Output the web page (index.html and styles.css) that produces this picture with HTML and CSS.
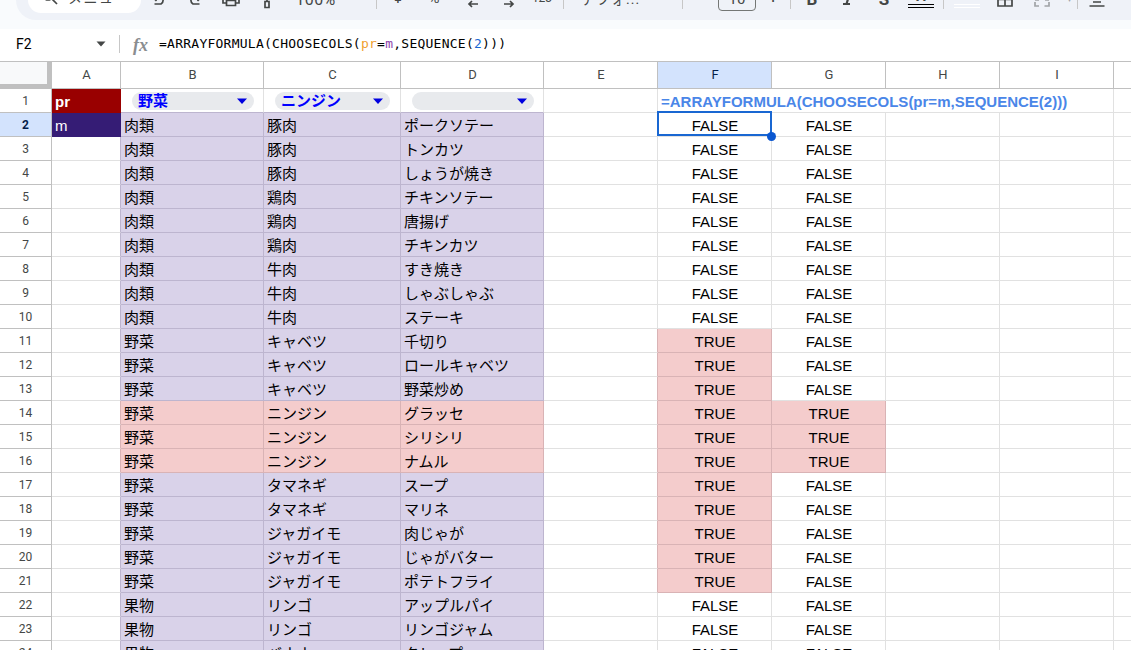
FILE: index.html
```
<!DOCTYPE html>
<html lang="ja">
<head>
    <meta charset="UTF-8">
    <meta name="viewport" content="width=device-width, initial-scale=1.0">
    <title>スプレッドシート</title>
    <link rel="stylesheet" href="styles.css">
</head>
<body>
    <div class="app">
        <!-- ツールバー -->
        <div class="toolbar">
            <div class="menu-search">
                <svg width="20" height="20" viewBox="0 0 20 20"><circle cx="8" cy="8" r="5"/><path d="M11.8 11.8L17 17"/></svg>
                <span>メニュー</span>
            </div>
            <div class="tool w36"><svg width="20" height="20" viewBox="0 0 20 20"><path d="M4 7h8a4 4 0 0 1 0 7H5.500M7.500 3L3.800 7l3.700 4"/></svg></div>
            <div class="tool w36"><svg width="20" height="20" viewBox="0 0 20 20"><path d="M16 7H8a4 4 0 0 0 0 7h6.500M12.500 3l3.700 4l-3.700 4"/></svg></div>
            <div class="tool w36"><svg width="20" height="20" viewBox="0 0 20 20"><path d="M5.500 6V2h9v4M5.500 13H2V7h16v6h-3.500M5.500 10.500h9v5h-9z"/></svg></div>
            <div class="tool w36"><svg width="20" height="20" viewBox="0 0 20 20"><path d="M4 2h12v4H4zM10 6v5M8 11.500h4v6H8z"/></svg></div>
            <div class="tool zoom">100%</div>
            <div class="divider"></div>
            <div class="tool raised w42">¥</div>
            <div class="tool raised w30">%</div>
            <div class="tool w48"><svg width="20" height="20" viewBox="0 0 20 20"><path d="M15 14H6M9 11l-3 3 3 3M5 5h1M9 3h4v4H9z"/></svg></div>
            <div class="tool w24"><svg width="20" height="20" viewBox="0 0 20 20"><path d="M5 14h9M11 11l3 3-3 3M3 5h1M7 3h3v4H7zM13 3h3v4h-3z"/></svg></div>
            <div class="tool raised num">123</div>
            <div class="divider"></div>
            <div class="tool raised font-name">デフォ...</div>
            <div class="divider"></div>
            <div class="font-size">10</div>
            <div class="tool plus">+</div>
            <div class="divider"></div>
            <div class="tool raised bold w42">B</div>
            <div class="tool w30"><svg width="20" height="20" viewBox="0 0 20 20"><path class="thick" d="M8 4h7M5 14h7M11.500 4L8.500 14"/></svg></div>
            <div class="tool raised bold w42">S</div>
            <div class="tool text-color">A</div>
            <div class="divider"></div>
            <div class="tool fill-color"><svg width="20" height="20" viewBox="0 0 20 20"><path d="M4 4l5-3 6 3-6 5zM16 9v2"/></svg></div>
            <div class="tool w36"><svg width="20" height="20" viewBox="0 0 20 20"><path d="M3 3h14v13H3zM10 3v13M3 9.500h14"/></svg></div>
            <div class="tool w38 off"><svg width="20" height="20" viewBox="0 0 20 20"><path d="M3 8V3h5M12 3h5v5M3 12v4h4M12.500 16H17v-4M3 10h4M13 10h4"/></svg></div>
            <div class="tool raised caret off">▾</div>
            <div class="divider"></div>
            <div class="tool w38"><svg width="20" height="20" viewBox="0 0 20 20"><path d="M3 4h14M6 8h8M6 12h8M2.500 16h15"/></svg></div>
        </div>

        <!-- 数式バー -->
        <div class="formula-bar">
            <div class="name-box">F2</div>
            <svg class="name-caret" width="10" height="6" viewBox="0 0 10 6"><path d="M0.500 0.500h9L5 5.500z"/></svg>
            <div class="fx"><i>fx</i></div>
            <div class="formula">=ARRAYFORMULA(CHOOSECOLS(<span class="c-orange">pr</span>=<span class="c-purple">m</span>,SEQUENCE(<span class="c-blue">2</span>)))</div>
        </div>

        <!-- シート -->
        <table class="sheet">
            <colgroup>
                <col class="col-no"><col class="col-a"><col class="col-b"><col class="col-c"><col class="col-b">
                <col class="col-e"><col class="col-e"><col class="col-e"><col class="col-e"><col class="col-e"><col class="col-e">
            </colgroup>
            <thead>
                <tr>
                    <th class="corner"></th><th>A</th><th>B</th><th>C</th><th>D</th><th>E</th>
                    <th class="active">F</th><th>G</th><th>H</th><th>I</th><th></th>
                </tr>
            </thead>
            <tbody id="rows">
                <tr>
                    <th>1</th>
                    <td class="name-pr">pr</td>
                    <td class="drop"><div class="chip"><span>野菜</span><svg width="10" height="6" viewBox="0 0 10 6"><path d="M0 0.500h10L5 6z"/></svg></div></td>
                    <td class="drop"><div class="chip chip-c"><span>ニンジン</span><svg width="10" height="6" viewBox="0 0 10 6"><path d="M0 0.500h10L5 6z"/></svg></div></td>
                    <td class="drop"><div class="chip"><span></span><svg width="10" height="6" viewBox="0 0 10 6"><path d="M0 0.500h10L5 6z"/></svg></div></td>
                    <td></td>
                    <td class="formula-text" colspan="4">=ARRAYFORMULA(CHOOSECOLS(pr=m,SEQUENCE(2)))</td>
                    <td></td>
                </tr>
            </tbody>
        </table>
    </div>

    <script src="sheet.js"></script>
</body>
</html>
```
FILE: styles.css
```
body {
    margin: 0;
    background: #fff;
    color: #000;
    font-family: "Liberation Sans", "Noto Sans CJK JP", sans-serif;
    overflow: hidden;
}

.app {
    width: 1131px;
    height: 650px;
    overflow: hidden;
    background: linear-gradient(#f9fbfd 29px, #fff 29px);
}

/* ツールバー（上半分は画面の外） */
.toolbar {
    display: flex;
    align-items: center;
    box-sizing: border-box;
    height: 40px;
    margin: -20px -30px 0 16px;
    padding-left: 12px;
    border-radius: 20px;
    background: #eff2f8;
    color: #444746;
    font-family: Roboto, "Noto Sans CJK JP", sans-serif;
}

.toolbar svg {
    fill: none;
    stroke: #444746;
    stroke-width: 1.7;
    flex: none;
}

.toolbar .thick {
    stroke-width: 2.2;
}

.menu-search {
    display: flex;
    align-items: center;
    box-sizing: border-box;
    width: 113px;
    height: 26px;
    padding-left: 12px;
    gap: 8px;
    border-radius: 13px;
    background: #fff;
    font-size: 14px;
    font-feature-settings: "palt" 0;
    letter-spacing: 1.5px;
    white-space: nowrap;
    flex: none;
}

.menu-search svg {
    margin-top: -6px;
}

.menu-search span {
    margin-top: -6px;
}

.tool {
    display: flex;
    align-items: center;
    justify-content: center;
    box-sizing: border-box;
    height: 40px;
    font-size: 15px;
    flex: none;
}

.raised {
    padding-bottom: 4px;
}

.w24 { width: 24px; }
.w30 { width: 30px; }
.w36 { width: 36px; }
.w38 { width: 38px; }
.w42 { width: 42px; }
.w48 { width: 48px; }

.zoom {
    width: 91px;
    padding: 0 30px 2px 0;
    font-size: 16px;
    letter-spacing: 0.3px;
}

.num {
    width: 42px;
    font-size: 12px;
}

.font-name {
    width: 118px;
    padding-left: 17px;
    justify-content: flex-start;
    font-size: 14px;
    letter-spacing: 1px;
}

.font-size {
    box-sizing: border-box;
    width: 38px;
    height: 22px;
    margin-left: 35px;
    border: 1px solid #747775;
    border-radius: 4px;
    font-size: 15px;
    line-height: 18px;
    text-align: center;
    flex: none;
}

.plus {
    width: 34px;
    padding-bottom: 5px;
    font-size: 18px;
}

.bold {
    padding-bottom: 3px;
    font-size: 17px;
    font-weight: 700;
}

.text-color {
    width: 26px;
    height: 15px;
    margin: 1px 9px 0 3px;
    padding-bottom: 5px;
    border-bottom: 4px double #000;
    font-size: 14px;
    font-weight: 700;
}

.fill-color {
    width: 26px;
    height: 15px;
    margin: 1px 7px 0 10px;
    border-bottom: 4px double #fff;
}

.fill-color svg {
    margin-top: -8px;
}

.off {
    opacity: 0.45;
}

.caret {
    width: 16px;
    font-size: 10px;
}

.divider {
    width: 1px;
    height: 18px;
    background: #c7c7c7;
    flex: none;
}

/* 数式バー */
.formula-bar {
    display: flex;
    align-items: center;
    box-sizing: border-box;
    height: 32px;
    margin-top: 9px;
    padding: 0 0 2px 16px;
}

.name-box {
    width: 80px;
    font-family: Roboto, sans-serif;
    font-size: 14px;
}

.name-caret {
    fill: #444746;
    margin-right: 13px;
}

.fx {
    box-sizing: border-box;
    width: 40px;
    height: 18px;
    padding-left: 13px;
    border-left: 1px solid #c7c7c7;
    color: #8a8d90;
    font-family: "Liberation Serif", serif;
    font-size: 18px;
    font-weight: 700;
    line-height: 20px;
}

.formula {
    font-family: "DejaVu Sans Mono", monospace;
    font-size: 13px;
    letter-spacing: 0.25px;
    line-height: 15px;
    padding-bottom: 1px;
    white-space: pre;
}

.c-orange { color: #f0a030; }
.c-purple { color: #8e44ad; }
.c-blue { color: #1967d2; }

/* シート本体 */
.sheet {
    width: 1144px;
    table-layout: fixed;
    border-collapse: separate;
    border-spacing: 0;
    border-top: 1px solid #c0c0c0;
}

.col-no { width: 52px; }
.col-a { width: 69px; }
.col-b { width: 143px; }
.col-c { width: 137px; }
.col-e { width: 114px; }

.sheet th,
.sheet td {
    box-sizing: border-box;
    height: 24px;
    padding: 0;
    border-right: 1px solid #e1e1e1;
    border-bottom: 1px solid #e1e1e1;
    font-size: 15px;
    line-height: 22px;
    white-space: nowrap;
    overflow: hidden;
}

.sheet td {
    padding-top: 2px;
    line-height: 21px;
}

.sheet th {
    border-color: #c0c0c0;
    color: #444746;
    font-family: Roboto, sans-serif;
    font-size: 12px;
    font-weight: 400;
    text-align: center;
}

.sheet thead th {
    height: 27px;
    padding-left: 1px;
    font-size: 13px;
}

.sheet th.corner {
    border-right: 5px solid #c0c0c0;
    border-bottom: 5px solid #c0c0c0;
    background: #f8f9fa;
}

.sheet th.active {
    background: #d3e3fd;
    color: #041e49;
}

.sheet tbody th.active {
    font-weight: 700;
}

.sheet td.item {
    padding-left: 3px;
    border-color: #bdb5cf;
    background: #d9d2e9;
}

.sheet td.item.hit {
    border-color: #d9b3b5;
    background: #f4cccc;
}

.sheet td.before-item {
    border-right-color: #bdb5cf;
}

.sheet td.before-hit {
    border-right-color: #d9b3b5;
}

.sheet td.bool {
    padding-left: 1px;
    text-align: center;
}

.sheet td.bool.true {
    border-color: #d9b3b5;
    background: #f4cccc;
}

.sheet td.name-pr,
.sheet td.name-m {
    padding-left: 3px;
    color: #fff;
}

.sheet td.name-pr {
    border-color: #990000;
    background: #990000;
    font-weight: 700;
}

.sheet td.name-m {
    border-color: #351c75;
    background: #351c75;
}

.sheet td.formula-text {
    padding-left: 3px;
    color: #4a86e8;
    font-weight: 700;
}

/* プルダウン */
.sheet td.drop {
    padding-top: 1px;
    border-bottom-color: #bdb5cf;
}

.chip {
    display: flex;
    align-items: center;
    justify-content: space-between;
    box-sizing: border-box;
    height: 18px;
    margin: 0 9px 0 11px;
    padding: 0 7px 0 6px;
    border-radius: 9px;
    background: #e8eaed;
    color: #0000ff;
    font-weight: 700;
    line-height: 18px;
}

.chip-c {
    margin-right: 10px;
}

.chip svg {
    fill: #0000e0;
}

/* 選択中のセル */
.sheet td.selected {
    position: relative;
    overflow: visible;
}

.selected::before {
    content: "";
    position: absolute;
    top: -2px;
    left: -1px;
    width: 111px;
    height: 21px;
    border: 2px solid #1967d2;
    pointer-events: none;
}

.selected::after {
    content: "";
    position: absolute;
    right: -5px;
    bottom: -5px;
    width: 9px;
    height: 9px;
    border-radius: 50%;
    background: #0b57d0;
    z-index: 1;
}
```
FILE: sheet.js
```
// 2行目以降のデータ
const items = [
    ['肉類', '豚肉', 'ポークソテー'],
    ['肉類', '豚肉', 'トンカツ'],
    ['肉類', '豚肉', 'しょうが焼き'],
    ['肉類', '鶏肉', 'チキンソテー'],
    ['肉類', '鶏肉', '唐揚げ'],
    ['肉類', '鶏肉', 'チキンカツ'],
    ['肉類', '牛肉', 'すき焼き'],
    ['肉類', '牛肉', 'しゃぶしゃぶ'],
    ['肉類', '牛肉', 'ステーキ'],
    ['野菜', 'キャベツ', '千切り'],
    ['野菜', 'キャベツ', 'ロールキャベツ'],
    ['野菜', 'キャベツ', '野菜炒め'],
    ['野菜', 'ニンジン', 'グラッセ'],
    ['野菜', 'ニンジン', 'シリシリ'],
    ['野菜', 'ニンジン', 'ナムル'],
    ['野菜', 'タマネギ', 'スープ'],
    ['野菜', 'タマネギ', 'マリネ'],
    ['野菜', 'ジャガイモ', '肉じゃが'],
    ['野菜', 'ジャガイモ', 'じゃがバター'],
    ['野菜', 'ジャガイモ', 'ポテトフライ'],
    ['果物', 'リンゴ', 'アップルパイ'],
    ['果物', 'リンゴ', 'リンゴジャム'],
    ['果物', 'バナナ', 'クレープ']
];
const pr = ['野菜', 'ニンジン'];

const tbody = document.getElementById('rows');

function addCell(tr, text, cls) {
    const td = document.createElement('td');
    td.textContent = text;
    td.className = cls || '';
    tr.appendChild(td);
    return td;
}

items.forEach((item, i) => {
    const tr = document.createElement('tr');
    const first = i === 0;
    const isF = item[0] === pr[0];
    const isG = item[1] === pr[1];
    const hit = isF && isG;

    const no = document.createElement('th');
    no.textContent = i + 2;
    if (first) no.className = 'active';
    tr.appendChild(no);

    addCell(tr, first ? 'm' : '', first ? 'name-m' : (hit ? 'before-hit' : 'before-item'));
    item.forEach(text => addCell(tr, text, hit ? 'item hit' : 'item'));
    addCell(tr, '', isF ? 'before-hit' : '');
    const f = addCell(tr, isF ? 'TRUE' : 'FALSE', isF ? 'bool true' : 'bool');
    if (first) f.classList.add('selected');
    addCell(tr, isG ? 'TRUE' : 'FALSE', isG ? 'bool true' : 'bool');
    addCell(tr, '');
    addCell(tr, '');
    addCell(tr, '');
    tbody.appendChild(tr);
});
```
